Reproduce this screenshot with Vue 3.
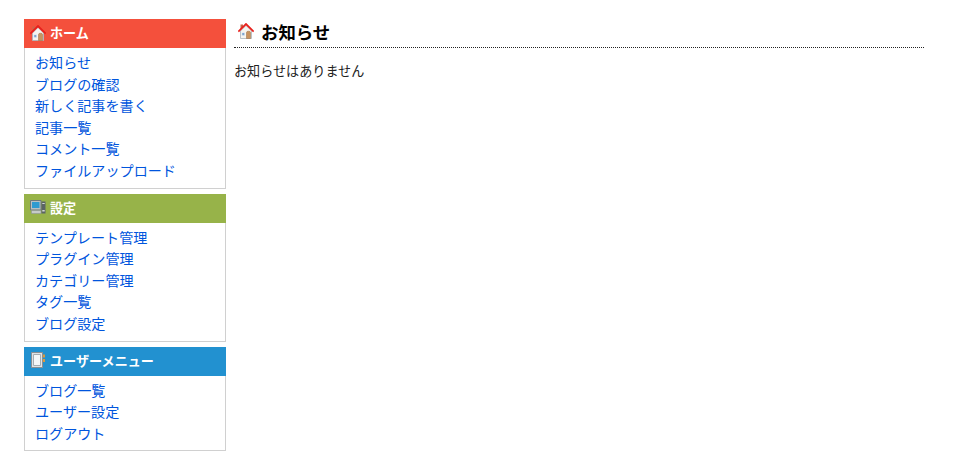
<template>
  <div class="page">
    <aside class="sidebar">
      <section v-for="menu in menus" :key="menu.title" class="menu">
        <h3 :class="menu.color">
          <svg v-if="menu.icon === 'home'" class="icon" viewBox="0 0 16 16">
            <path d="M2.5 8v7.5h11V8L8 2.5z" fill="#f6f4ee" stroke="#a9b4bc" stroke-width=".8" />
            <path d="M2.500 1.500h2.500v2.500L2.500 6.500z" fill="#c9654a" />
            <path d="M.3 8.600 8 1l7.700 7.600" fill="none" stroke="#e8201c" stroke-width="1.800" />
            <path d="M8.500 15.500V9.400q0-1.200 2-1.200t2 1.200v6.100z" fill="#c8935f" stroke="#9a6a3e" stroke-width=".5" />
            <path d="M3.800 9.500h3v3.200h-3z" fill="#7fa6cf" stroke="#fff" stroke-width=".6" />
          </svg>
          <svg v-else-if="menu.icon === 'computer'" class="icon" viewBox="0 0 16 16">
            <path d="M.5 1.500h10.500v9.500H.5z" fill="#b9c0c2" stroke="#6d7a7c" />
            <path d="M2 3h7.500v6H2z" fill="#2f9bd0" />
            <path d="M1.500 11.500h9.500v3H1.500z" fill="#c6cbc8" stroke="#8b9496" stroke-width=".6" />
            <path d="M11.500 2.500H15.500V14.500H11.500z" fill="#5b6466" />
            <path d="M12.300 4h2.400v1h-2.400zM12.300 11h2.400v1.500h-2.400z" fill="#d3d7d2" />
          </svg>
          <svg v-else class="icon" viewBox="0 0 16 16">
            <path d="M1.500 .5h11v15h-11z" fill="#dfe3e6" stroke="#8b8f92" />
            <path d="M3.500 2.500h7v11h-7z" fill="#f5f7f8" stroke="#a6adb2" />
            <path d="M13 2.500h2v3h-2zM13 7h2v3h-2z" fill="#d99a3f" />
          </svg>
          {{ menu.title }}
        </h3>
        <ul>
          <li v-for="link in menu.links" :key="link"><a href="#">{{ link }}</a></li>
        </ul>
      </section>
    </aside>
    <main class="content">
      <h2>
        <svg class="icon" viewBox="0 0 16 16">
          <path d="M2.5 8v7.5h11V8L8 2.5z" fill="#f6f4ee" stroke="#a9b4bc" stroke-width=".8" />
          <path d="M2.500 1.500h2.500v2.500L2.500 6.500z" fill="#c9654a" />
          <path d="M.3 8.600 8 1l7.700 7.600" fill="none" stroke="#e8201c" stroke-width="1.800" />
          <path d="M8.500 15.500V9.400q0-1.200 2-1.200t2 1.200v6.100z" fill="#c8935f" stroke="#9a6a3e" stroke-width=".5" />
          <path d="M3.800 9.500h3v3.200h-3z" fill="#7fa6cf" stroke="#fff" stroke-width=".6" />
        </svg>
        お知らせ
      </h2>
      <p>お知らせはありません</p>
    </main>
  </div>
</template>

<script setup>
const menus = [
  {
    title: 'ホーム',
    color: 'red',
    icon: 'home',
    links: ['お知らせ', 'ブログの確認', '新しく記事を書く', '記事一覧', 'コメント一覧', 'ファイルアップロード']
  },
  {
    title: '設定',
    color: 'green',
    icon: 'computer',
    links: ['テンプレート管理', 'プラグイン管理', 'カテゴリー管理', 'タグ一覧', 'ブログ設定']
  },
  {
    title: 'ユーザーメニュー',
    color: 'blue',
    icon: 'book',
    links: ['ブログ一覧', 'ユーザー設定', 'ログアウト']
  }
]
</script>

<style>
body {
  background: #fff;
}
</style>

<style scoped>
.page {
  display: flex;
  align-items: flex-start;
  gap: 8px;
  width: 900px;
  padding: 19px 0 0 24px;
  font-family: "Noto Sans CJK JP", "Noto Sans", sans-serif;
  font-size: 13.1px;
  color: #222;
}

.sidebar {
  display: flex;
  flex-direction: column;
  gap: 5px;
  width: 202px;
  flex-shrink: 0;
}

.menu {
  border: 1px solid #d0d0d0;
  border-top: 0;
}

.menu h3 {
  display: flex;
  align-items: center;
  gap: 4px;
  box-sizing: border-box;
  height: 29px;
  margin: 0 -1px;
  padding: 0 0 2px 6px;
  font-size: 13.1px;
  font-weight: bold;
  color: #fff;
}

.red {
  background-color: #f4503c;
}

.green {
  background-color: #97b349;
}

.blue {
  background-color: #2291d0;
}

ul {
  margin: 0;
  padding: 4px 10px 6px;
  list-style: none;
}

li {
  height: 21.6px;
  line-height: 21.6px;
  font-size: 14.1px;
}

a {
  color: #0055dd;
  text-decoration: none;
}

.icon {
  width: 16px;
  height: 16px;
  flex-shrink: 0;
}

.content {
  flex: 1;
}

h2 {
  display: flex;
  align-items: center;
  gap: 7px;
  box-sizing: border-box;
  height: 29px;
  margin: 0;
  padding: 0 0 4px 4px;
  border-bottom: 1px dotted #222;
  font-size: 17.4px;
  font-weight: bold;
  color: #000;
}

p {
  margin: 13px 0 0;
  line-height: 19px;
}
</style>
